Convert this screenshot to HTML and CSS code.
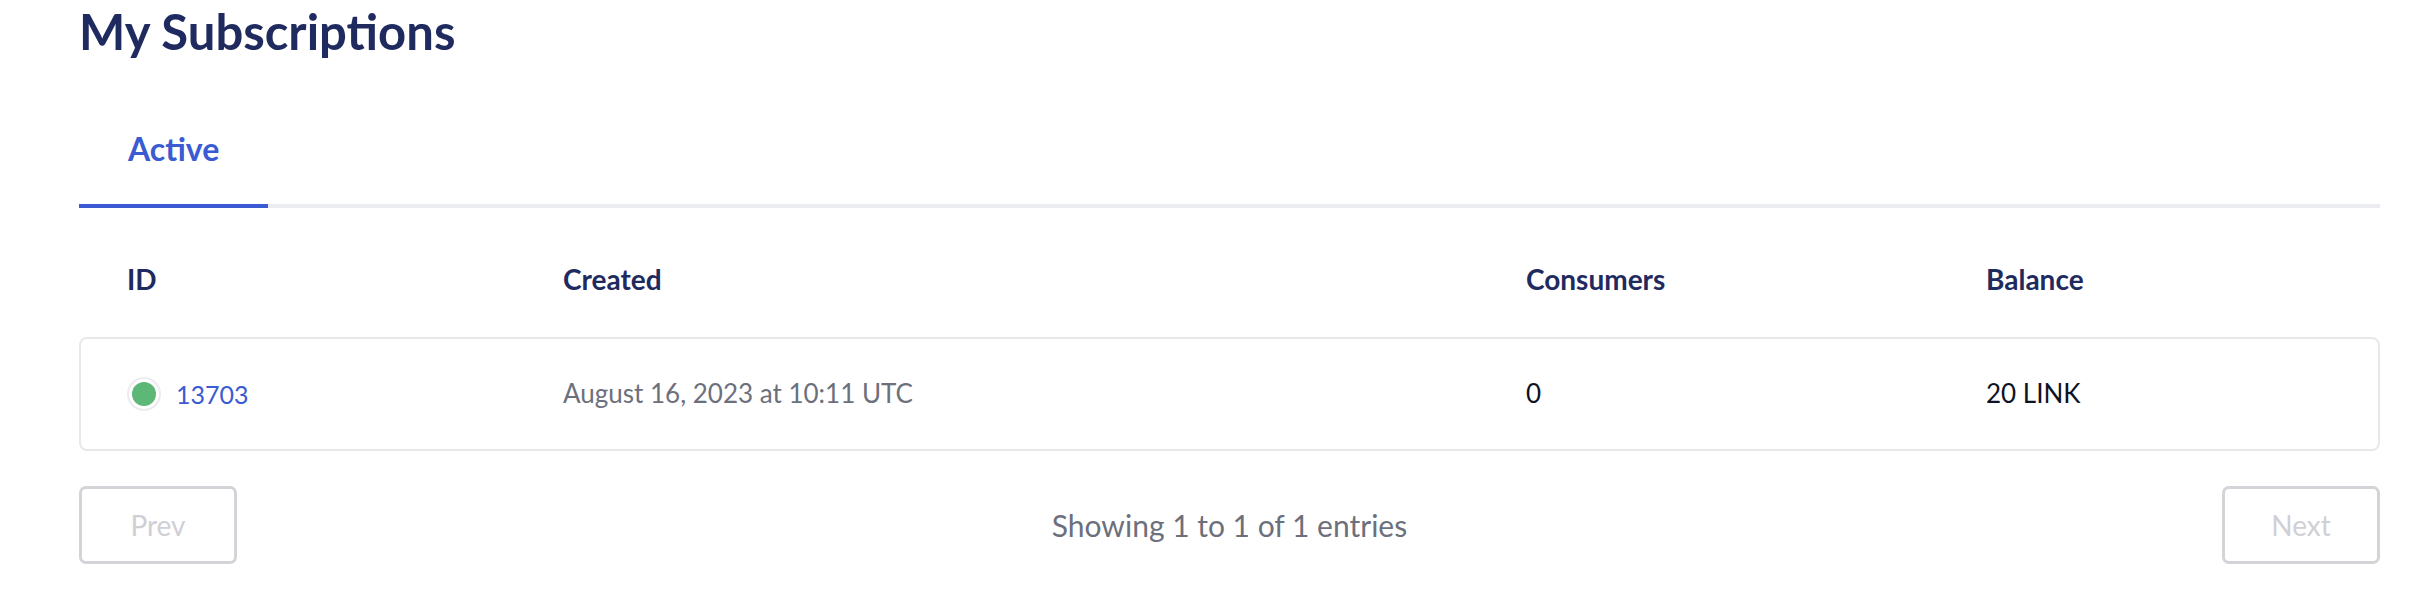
FILE: index.html
```html
<!DOCTYPE html>
<html lang="en">
<head>
<meta charset="utf-8">
<title>My Subscriptions</title>
<link rel="stylesheet" href="styles.css">
</head>
<body>
<main class="page">
  <h1 class="title">My Subscriptions</h1>
  <nav class="tabs">
    <div class="tab tab-active">Active</div>
  </nav>
  <section class="table">
    <div class="grid head">
      <div>ID</div>
      <div>Created</div>
      <div>Consumers</div>
      <div>Balance</div>
    </div>
    <div class="grid row">
      <div class="id-cell">
        <span class="dot"><span class="dot-inner"></span></span>
        <a class="id-link">13703</a>
      </div>
      <div class="muted">August 16, 2023 at 10:11 UTC</div>
      <div class="dark">0</div>
      <div class="dark">20 LINK</div>
    </div>
  </section>
  <div class="pager">
    <button class="btn" disabled>Prev</button>
    <span class="showing">Showing 1 to 1 of 1 entries</span>
    <button class="btn" disabled>Next</button>
  </div>
</main>
</body>
</html>
```
FILE: styles.css
```css
* { box-sizing: border-box; }
html, body { margin: 0; padding: 0; background: #ffffff; }
body { font-family: "Lato", "Liberation Sans", sans-serif; }

.page {
  padding: 2px 46px 0 79px;
}

.title {
  margin: 0 0 48px 0;
  font-size: 49px;
  line-height: 1.2;
  font-weight: 700;
  color: #1f2a5f;
}

.tabs {
  display: flex;
  border-bottom: 4px solid #ebecef;
}
.tab {
  font-size: 32px;
  line-height: 1.2;
  font-weight: 700;
  padding: 21px 49px 36px 49px;
  margin-bottom: -4px;
  border-bottom: 4px solid transparent;
}
.tab-active {
  color: #3b5bd2;
  border-bottom-color: #3b5bd2;
}

.grid {
  display: grid;
  grid-template-columns: 436px 963px 460px 1fr;
  align-items: center;
}
.head {
  padding: 55px 0 40px 48px;
  font-size: 28px;
  line-height: 1.2;
  font-weight: 700;
  color: #1f2a5f;
}
.row {
  border: 2px solid #e8e8ea;
  border-radius: 8px;
  padding: 38px 0 38px 46px;
  font-size: 26px;
  line-height: 1.2;
  min-height: 113px;
}
.id-cell {
  display: flex;
  align-items: center;
  gap: 15px;
}
.dot {
  width: 34px;
  height: 34px;
  border-radius: 50%;
  border: 2px solid #ececee;
  padding: 3px;
  background: #ffffff;
  display: flex;
}
.dot-inner {
  width: 24px;
  height: 24px;
  border-radius: 50%;
  background: #5db776;
}
.id-link {
  color: #3b5bd2;
  font-size: 25px;
}
.muted { color: #6c707c; }
.dark { color: #0d1226; }

.pager {
  margin-top: 35px;
  display: flex;
  align-items: center;
  justify-content: space-between;
}
.btn {
  width: 158px;
  height: 78px;
  border: 3px solid #d3d3d8;
  border-radius: 7px;
  background: #ffffff;
  color: #cfcfd5;
  font-family: "Lato", "Liberation Sans", sans-serif;
  font-size: 28px;
  font-weight: 400;
  padding: 0;
}
.showing {
  font-size: 30px;
  line-height: 1.2;
  color: #6c707c;
}
```
